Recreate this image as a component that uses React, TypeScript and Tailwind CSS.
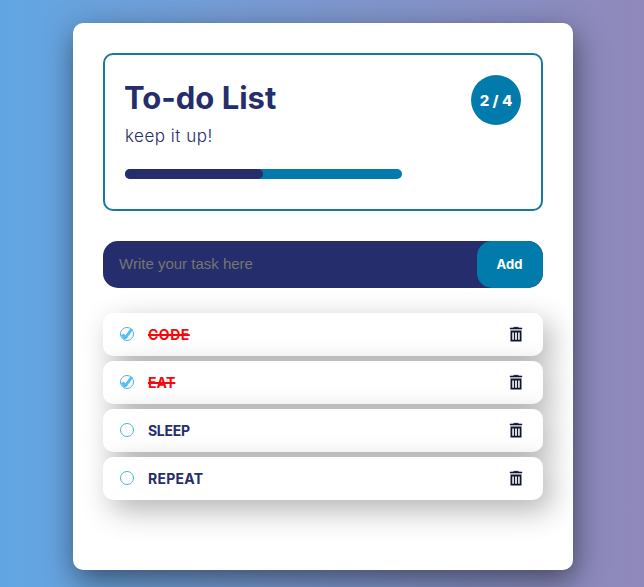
import React from "react";

type Task = { name: string; done: boolean; tracking: string };

const tasks: Task[] = [
  { name: "CODE", done: true, tracking: "tracking-[0.5px]" },
  { name: "EAT", done: true, tracking: "tracking-[0.1px]" },
  { name: "SLEEP", done: false, tracking: "tracking-[-0.3px]" },
  { name: "REPEAT", done: false, tracking: "tracking-[0.25px]" },
];

function CheckCircle({ done }: { done: boolean }) {
  return (
    <svg className="-mt-0.5 h-4 w-4 shrink-0" viewBox="0 0 16 16" fill="none">
      <circle cx="8" cy="8" r="6.5" stroke="#4ab3e4" strokeWidth="1" />
      {done && <path d="M1.8 9.2L4.6 7.6L6.3 9.4L11.6 2.2L14 3.7L7.2 13.3L4.8 13.3Z" fill="#55bdf2" />}
    </svg>
  );
}

function Trash() {
  return (
    <svg className="-mt-px h-4 w-4" viewBox="0 0 16 16" fill="none" stroke="#11182e">
      <path d="M1.8 2.5H14.2" strokeWidth="1.6" />
      <path d="M5.5 1.4H10.5" strokeWidth="1" />
      <path d="M3.4 5.5H12.6V14.7H3.4Z" strokeWidth="1.8" />
      <path d="M6.5 5V14.5M9.5 5V14.5" strokeWidth="1.3" />
    </svg>
  );
}

function TaskRow({ task }: { task: Task }) {
  return (
    <li className="flex h-[43px] items-center rounded-[10px] bg-white pr-[19px] pl-4 shadow-[8px_10px_30px_rgba(0,0,0,0.3)]">
      <CheckCircle done={task.done} />
      <span
        className={`mt-px ml-[13px] text-[14px] leading-5 font-bold whitespace-nowrap ${task.tracking} ${
          task.done ? "text-[#f8080c] line-through decoration-[1.5px]" : "text-[#262d6c]"
        }`}
      >
        {task.name}
      </span>
      <button className="ml-auto" aria-label="Delete">
        <Trash />
      </button>
    </li>
  );
}

export default function App() {
  return (
    <main className="flex h-[587px] w-[644px] overflow-hidden bg-linear-to-r from-[#60a6e3] to-[#9088ba] pt-[23px] pl-[73px] font-['Inter',sans-serif] text-[#262d6c]">
      <div className="h-[547px] w-[500px] rounded-[10px] bg-white p-[30px] shadow-[2px_10px_30px_rgba(0,0,0,0.5)]">
        <header className="flex h-[158px] justify-between rounded-[10px] border-2 border-[#167a9e] p-5">
          <div className="flex flex-col">
            <h1 className="mt-[3px] -ml-px h-10 text-[31px] leading-10 font-bold whitespace-nowrap">To-do List</h1>
            <p className="mt-[6px] h-6 text-[17px] leading-6 font-light tracking-[0.5px] whitespace-nowrap">keep it up!</p>
            <div className="mt-[21px] h-[10px] w-[277px] rounded-[5px] bg-[#007bab]">
              <div className="h-[10px] w-[138px] rounded-[5px] bg-[#262d6c]" />
            </div>
          </div>
          <div className="flex h-[50px] w-[50px] items-center justify-center rounded-full bg-[#007bab] pt-0.5 text-[15px] font-extrabold whitespace-nowrap text-white">
            2 / 4
          </div>
        </header>
        <form className="mt-[30px] flex h-[47px] overflow-hidden rounded-[15px] bg-[#262d6c]">
          <input
            className="min-w-0 flex-1 pl-4 font-['Liberation_Sans',sans-serif] text-[15px] placeholder:text-[#757575]"
            placeholder="Write your task here"
          />
          <button type="button" className="w-[66px] rounded-[15px] bg-[#007bab] pr-px text-[13px] font-bold text-white">
            Add
          </button>
        </form>
        <ul className="mt-[25px] flex flex-col gap-[5px]">
          {tasks.map((task) => (
            <TaskRow key={task.name} task={task} />
          ))}
        </ul>
      </div>
    </main>
  );
}
